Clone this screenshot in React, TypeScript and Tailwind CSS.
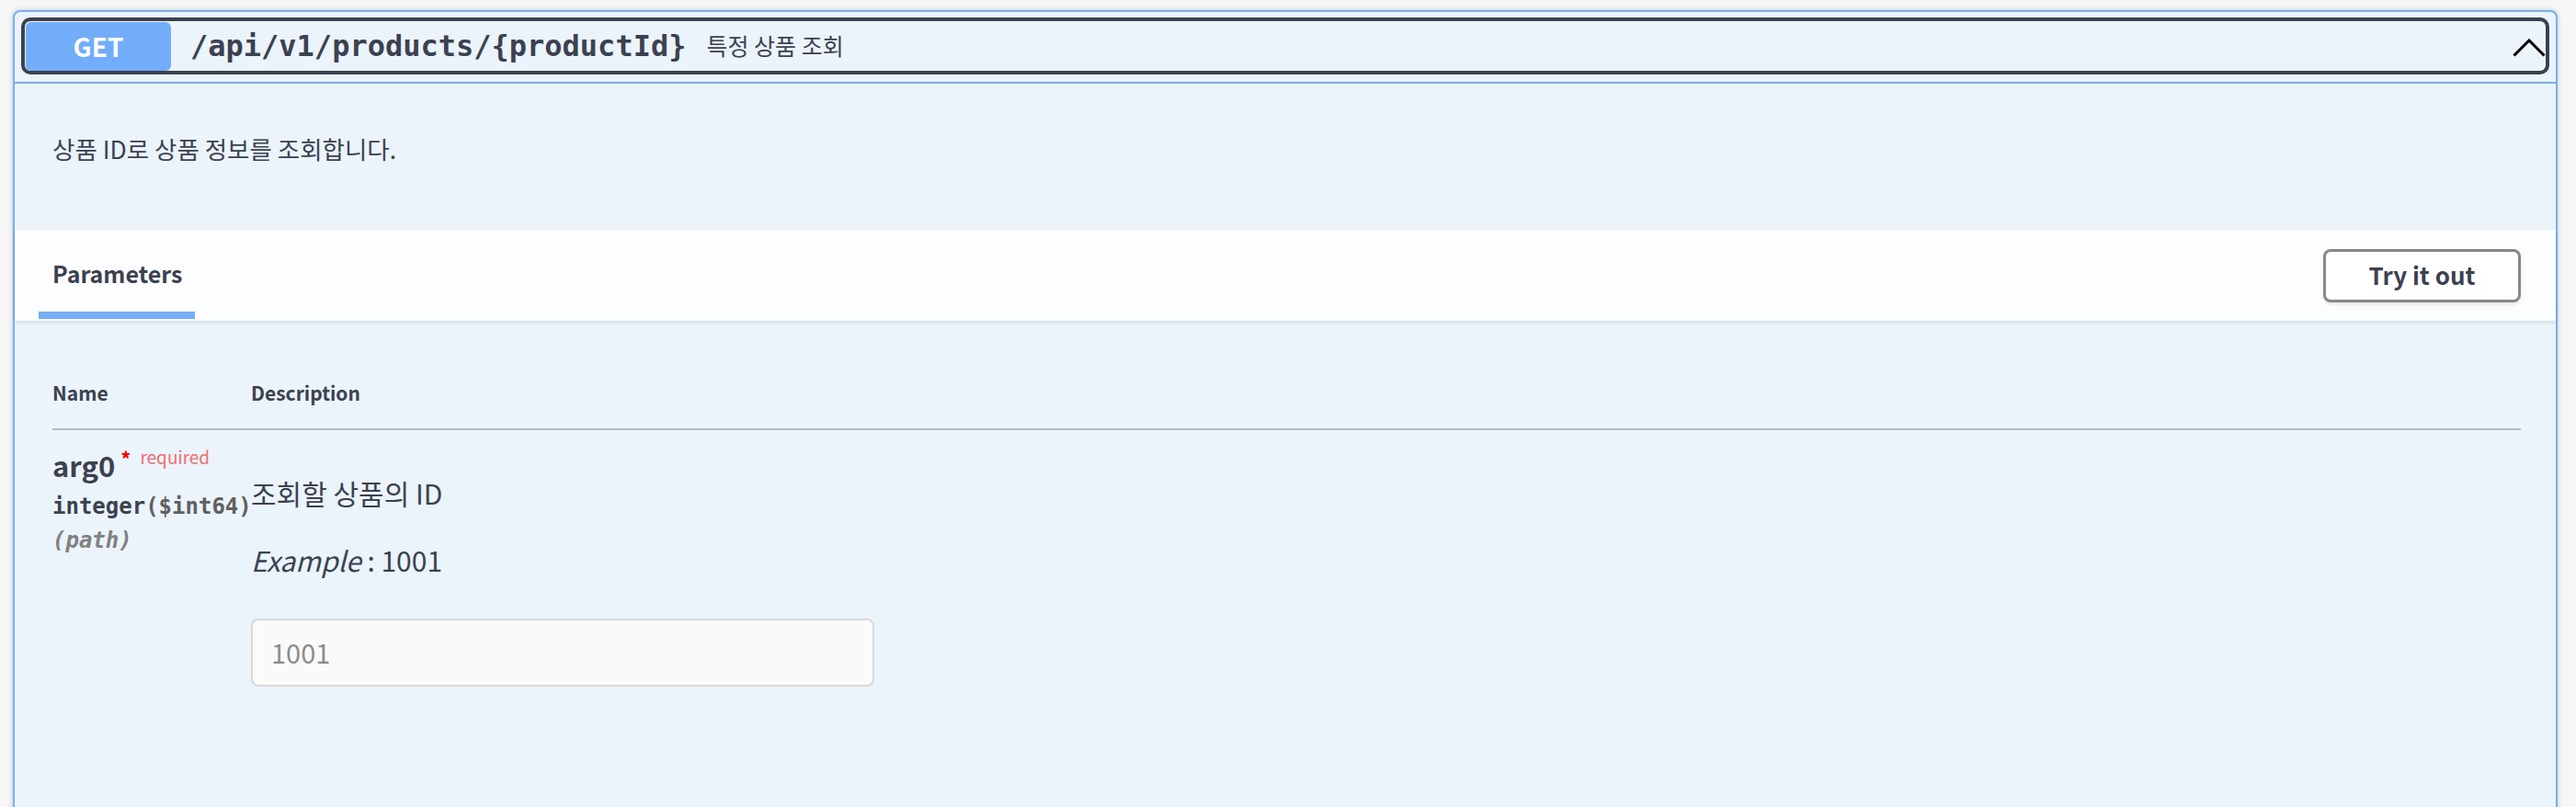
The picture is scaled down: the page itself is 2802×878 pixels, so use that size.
import { useState } from "react";

const sans = "font-['Noto_Sans_CJK_KR',sans-serif]";
const mono = "font-['DejaVu_Sans_Mono',monospace]";

function Summary() {
  return (
    <div className="flex pt-[6px] pb-[8px] px-[7px] border-b-2 border-[#74aff8]">
      <div className="flex-1 h-[62px] flex items-center border-4 border-[#3b4151] rounded-[10px] pl-[1px]">
        <span
          className={`w-[158px] h-[53px] shrink-0 rounded-[6px] bg-[#72adf9] text-white text-[28px] font-bold flex items-center justify-center ${sans}`}
        >
          GET
        </span>
        <span className={`ml-[21px] text-[32px] font-bold text-[#3b4151] ${mono}`}>
          /api/v1/products/{"{productId}"}
        </span>
        <span className={`ml-[22px] text-[25px] text-[#3b4151] ${sans}`}>특정 상품 조회</span>
        <svg className="ml-auto mt-[4px]" width="36" height="20" viewBox="0 0 36 20">
          <polyline points="1.5,18.5 18,2 34.5,18.5" fill="none" stroke="#000" strokeWidth="3" />
        </svg>
      </div>
    </div>
  );
}

function SectionHeader() {
  return (
    <div className="relative z-10 h-[99px] bg-[#fcfdfe] shadow-[0_2px_4px_rgba(0,0,0,0.1)] flex justify-between pl-[26px] pr-[38px]">
      <div className="flex flex-col">
        <h4 className={`ml-[15px] mt-[27px] leading-[40px] text-[25px] font-bold text-[#3b4151] ${sans}`}>
          Parameters
        </h4>
        <div className="mt-[22px] h-[8px] w-[170px] bg-[#74aff8]" />
      </div>
      <button
        className={`mt-[21px] w-[215px] h-[58px] pb-[4px] border-[3px] border-[#888888] rounded-[8px] bg-white text-[26px] font-bold text-[#3b4151] shadow-[0_2px_4px_rgba(0,0,0,0.1)] ${sans}`}
      >
        Try it out
      </button>
    </div>
  );
}

function ParamTable() {
  const [value, setValue] = useState("");
  return (
    <div className="pl-[41px] pr-[38px] pt-[62px]">
      <div className={`flex pb-[23px] border-b-2 border-[#b4bac4] text-[21px] leading-[32px] font-bold text-[#3b4151] ${sans}`}>
        <div className="w-[216px]">Name</div>
        <div>Description</div>
      </div>
      <div className="flex pt-[18px]">
        <div className="w-[216px] shrink-0 flex flex-col">
          <div className={`flex items-start ${sans}`}>
            <span className="text-[31px] leading-[40px] font-bold text-[#3b4151]">arg0</span>
            <span className="ml-[6px] text-[22px] leading-[24px] font-bold text-[#ff0000]">*</span>
            <span className="ml-[10px] text-[19px] leading-[22px] text-[#f26d6d]">required</span>
          </div>
          <div className={`mt-[9px] text-[24px] leading-[32px] font-bold whitespace-nowrap text-[#3b4151] ${mono}`}>
            integer<span className="text-[#606060]">($int64)</span>
          </div>
          <div className={`mt-[5px] text-[24px] leading-[32px] font-bold italic text-[#808080] ${mono}`}>
            (path)
          </div>
        </div>
        <div className={`flex flex-col text-[#3b4151] ${sans}`}>
          <p className="mt-[30px] text-[30px] leading-[40px]">조회할 상품의 ID</p>
          <p className="mt-[33px] text-[30px] leading-[40px]">
            <i>Example</i> : 1001
          </p>
          <input
            value={value}
            onChange={(e) => setValue(e.target.value)}
            placeholder="1001"
            className="mt-[44px] w-[678px] h-[74px] px-[20px] pb-[3px] border-2 border-[#d9d9d9] rounded-[8px] bg-[#fafafa] text-[29px] text-[#3b4151] placeholder:text-[#8c8c8c] outline-none"
          />
        </div>
      </div>
    </div>
  );
}

export default function App() {
  return (
    <div className="h-[878px] overflow-hidden bg-[#f7f7f7] pt-[11px] pl-[14px] pr-[20px]">
      <div className="min-h-[900px] border-2 border-[#74aff8] rounded-t-[8px] bg-[#ebf3fb] shadow-[0_0_6px_rgba(0,0,0,0.19)]">
        <Summary />
        <div className="h-[159px] pt-[53px] pl-[41px]">
          <p className={`text-[26.5px] leading-[36px] text-[#3b4151] ${sans}`}>상품 ID로 상품 정보를 조회합니다.</p>
        </div>
        <SectionHeader />
        <ParamTable />
      </div>
    </div>
  );
}
